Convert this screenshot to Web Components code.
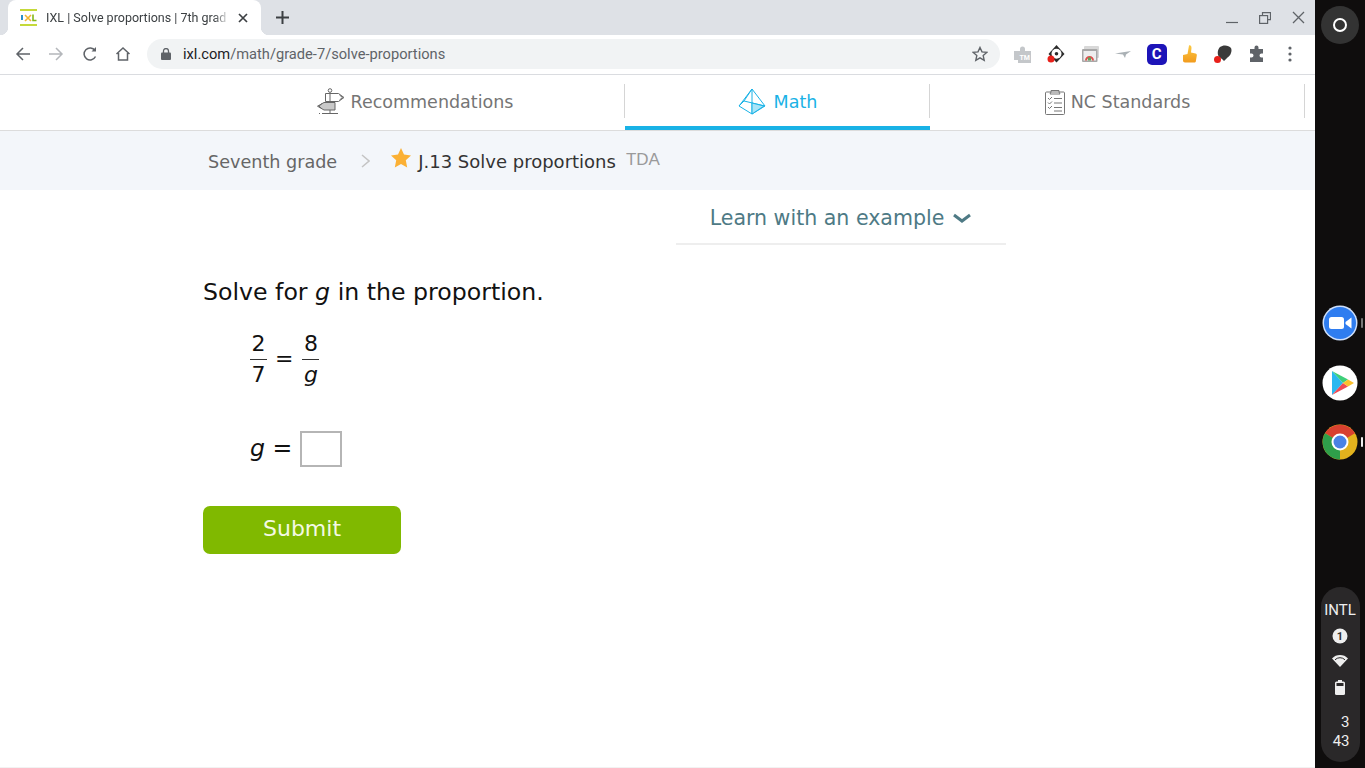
<!DOCTYPE html>
<html lang="en">
<head>
<meta charset="utf-8">
<title>IXL | Solve proportions</title>
<style>
  html, body { margin: 0; height: 100%; background: #fff; overflow: hidden; }
  body { font-family: "DejaVu Sans", sans-serif; }
</style>
</head>
<body>
<app-shell>
  <browser-tabstrip title-text="IXL | Solve proportions | 7th grad"></browser-tabstrip>
  <browser-toolbar></browser-toolbar>
  <ixl-nav>
    <nav-tab icon="sign" style="width:421px">Recommendations</nav-tab>
    <nav-tab icon="pyramid" active style="width:305px">Math</nav-tab>
    <nav-tab icon="clipboard" style="width:375px">NC Standards</nav-tab>
  </ixl-nav>
  <ixl-breadcrumb></ixl-breadcrumb>
  <learn-example>Learn with an example</learn-example>
  <ixl-question></ixl-question>
  <os-shelf slot="shelf"></os-shelf>
</app-shell>

<script>
  function define(name, html, init) {
    customElements.define(
      name,
      class extends HTMLElement {
        connectedCallback() {
          if (this.shadowRoot) return;
          this.attachShadow({ mode: "open" });
          this.shadowRoot.innerHTML = typeof html === "function" ? html(this) : html;
          if (init) init(this);
        }
      }
    );
  }

  define("app-shell", `
    <style>
      :host { display: grid; grid-template-columns: 1315px 50px; height: 768px; width: 1365px; }
      main { min-width: 0; display: flex; flex-direction: column; }
      .foot { margin-top: auto; height: 1px; background: #f2f2f2; }
    </style>
    <main><slot></slot><div class="foot"></div></main>
    <slot name="shelf"></slot>
  `);

  define("browser-tabstrip", (el) => `
    <style>
      :host { display: flex; align-items: flex-start; height: 35px; background: #dee1e6;
        font-family: Roboto, sans-serif; position: relative; }
      .tab { box-sizing: border-box; width: 253px; height: 35px; margin-left: 8px; background: #fff;
        border-radius: 8px 8px 0 0; display: flex; align-items: center; padding-left: 12px; position: relative; }
      .tab::before, .tab::after { content: ""; position: absolute; bottom: 0; width: 8px; height: 8px; }
      .tab::before { left: -8px; background: radial-gradient(circle at 0 0, #dee1e6 8px, #fff 8.5px); }
      .tab::after { right: -8px; background: radial-gradient(circle at 100% 0, #dee1e6 8px, #fff 8.5px); }
      .fav { width: 17px; height: 17px; flex: none; margin-right: 9px; }
      .title { width: 184px; font-size: 12.5px; color: #3c4043; white-space: nowrap;
        -webkit-mask-image: linear-gradient(to right, #000 168px, transparent 184px); }
      .x { width: 10px; height: 10px; margin-left: 8px; flex: none; }
      .plus { width: 13px; height: 13px; margin: 11px 0 0 15px; flex: none; }
      .win { margin-left: auto; display: flex; align-items: center; gap: 21px; height: 35px; padding-right: 10px; }
    </style>
    <div class="tab">
      <svg class="fav" viewBox="0 0 17 17">
        <rect x="0" y="0" width="17" height="2" fill="#c5d93a"/>
        <rect x="0" y="15" width="17" height="2" fill="#c5d93a"/>
        <rect x="1" y="6" width="2" height="5" fill="#2a8fc9"/>
        <path d="M5 6l6 6M11 6l-6 6" stroke="#f2b632" stroke-width="1.6"/>
        <path d="M13 5.500v6h3.500" fill="none" stroke="#82b81a" stroke-width="1.600"/>
      </svg>
      <span class="title">${el.getAttribute("title-text")}</span>
      <svg class="x" viewBox="0 0 10 10"><path d="M1 1l8 8M9 1l-8 8" stroke="#3c4043" stroke-width="1.700"/></svg>
    </div>
    <svg class="plus" viewBox="0 0 13 13"><path d="M6.500 0v13M0 6.500h13" stroke="#3c4043" stroke-width="2"/></svg>
    <div class="win">
      <svg width="12" height="12" viewBox="0 0 12 12"><path d="M0 10.500h12" stroke="#5f6368" stroke-width="1.200"/></svg>
      <svg width="12" height="12" viewBox="0 0 12 12" fill="none" stroke="#5f6368" stroke-width="1.200"><path d="M3.500 3V.6h8v7H9"/><rect x=".6" y="3.600" width="8" height="7.800"/></svg>
      <svg width="13" height="13" viewBox="0 0 13 13"><path d="M1 1l11 11M12 1L1 12" stroke="#5f6368" stroke-width="1.300"/></svg>
    </div>
  `);

  define("browser-toolbar", `
    <style>
      :host { display: flex; align-items: center; box-sizing: border-box; height: 40px; background: #fff;
        border-bottom: 1px solid #dadce0; font-family: Roboto, sans-serif; padding-bottom: 1px; }
      .nav { display: flex; align-items: center; margin-left: 15px; gap: 17.400px; width: 132px; flex: none; }
      .omni { box-sizing: border-box; width: 853px; height: 30px; border-radius: 15px; background: #f1f3f4;
        display: flex; align-items: center; padding-left: 14px; font-size: 14.670px; color: #5f6368; flex: none; }
      .omni b { font-weight: 400; color: #202124; }
      .lock { margin-right: 12px; }
      .star { margin-left: auto; margin-right: 12px; }
      .ext { display: flex; align-items: center; margin-left: 13px; gap: 13.400px; }
      .ext > * { flex: none; }
      .c { width: 20px; height: 21px; border-radius: 5px; background: #1d14b8; color: #fff; font: 700 15px/21px Roboto, sans-serif;
        text-align: center; }
    </style>
    <div class="nav">
      <svg width="16" height="16" viewBox="0 0 16 16" fill="none" stroke="#5f6368" stroke-width="1.500"><path d="M15 8H2M8 2L2 8l6 6"/></svg>
      <svg width="16" height="16" viewBox="0 0 16 16" fill="none" stroke="#b4b7bb" stroke-width="1.500"><path d="M1 8h13M8 2l6 6-6 6"/></svg>
      <svg width="16" height="16" viewBox="0 0 16 16" fill="none" stroke="#5f6368" stroke-width="1.500"><path d="M13.500 10.500A6 6 0 1 1 13 4.500"/><path d="M14 1v4.500H9.500" fill="#5f6368" stroke="none"/></svg>
      <svg width="16" height="16" viewBox="0 0 16 16" fill="none" stroke="#5f6368" stroke-width="1.500"><path d="M1.500 8L8 2l6.500 6M3.500 7v7h9V7"/></svg>
    </div>
    <div class="omni">
      <svg class="lock" width="10" height="12" viewBox="0 0 10 12"><rect y="4.500" width="10" height="7.500" rx="1" fill="#5f6368"/><path d="M2.500 5V3a2.500 2.500 0 0 1 5 0v2" fill="none" stroke="#5f6368" stroke-width="1.300"/></svg>
      <span><b>ixl.com</b>/math/grade-7/solve-proportions</span>
      <svg class="star" width="16" height="16" viewBox="0 0 16 16" fill="none" stroke="#5f6368" stroke-width="1.400"><path d="M8 1.500l2 4.400 4.800.5-3.600 3.200 1 4.700L8 11.900l-4.200 2.400 1-4.700L1.200 6.400 6 5.900z"/></svg>
    </div>
    <div class="ext">
      <svg width="20" height="20" viewBox="0 0 20 20"><path d="M1 7h6V5a2.500 2.500 0 0 1 5 0v2h6v12H5v-3H1z" fill="#c4c7ca"/><text x="6.500" y="16" font-size="7" font-weight="700" fill="#fff" font-family="Roboto">TM</text></svg>
      <svg width="20" height="20" viewBox="0 0 20 20"><path d="M10.500 1l8 9-8 8.500-8-8.500z" fill="#2b2b2b"/><circle cx="10.500" cy="9.700" r="5" fill="#fff"/><circle cx="10.500" cy="9.700" r="1.800" fill="#2b2b2b"/><circle cx="5" cy="15" r="3.500" fill="#e8201a"/></svg>
      <svg width="20" height="20" viewBox="0 0 20 20"><rect x="4" y="2" width="15" height="12" rx="1" fill="#d8d8d8"/><rect x="2" y="5" width="15.500" height="13" rx="1" fill="#a8a8a8"/><rect x="3.500" y="7" width="12.500" height="9.500" fill="#eee"/><path d="M5 16.500a4.500 4.500 0 0 1 9 0h-2a2.500 2.500 0 0 0-5 0z" fill="#d9534f"/><rect x="8" y="13.500" width="3" height="3" fill="#5aa65a"/></svg>
      <svg width="20" height="20" viewBox="0 0 20 20"><path d="M2 9.500L18 7l-5 3.500-1 3.500-2-3.500z" fill="#aab1b5"/></svg>
      <div class="c">C</div>
      <svg width="20" height="20" viewBox="0 0 20 20"><defs><linearGradient id="thumb" x1="0" y1="0" x2="0" y2="1"><stop offset="0" stop-color="#fbc943"/><stop offset="1" stop-color="#f29b1d"/></linearGradient></defs><path d="M3 11l4.500-1L9 1.500c1.500-.5 2.500.5 2.500 2.500l-.5 4.500 4.500 1c1 .3 1.500 1 1.300 2l-1 6c-.2.700-.8 1-1.500 1H5c-1.200 0-2-.8-2-2z" fill="url(#thumb)"/></svg>
      <svg width="20" height="20" viewBox="0 0 20 20"><path d="M7 3c3-2.500 9-2 11 1 1.500 3-.5 8-3.500 9.500L11 17l-2-2-3-2C4 10 4.500 5.500 7 3z" fill="#3a3a3a"/><circle cx="4.500" cy="15.500" r="3.500" fill="#e8201a"/></svg>
      <svg width="20" height="20" viewBox="0 0 20 20"><path d="M7.500 3.500a2 2 0 0 1 4 0V5H16v4.500h-1.500a2 2 0 0 0 0 4H16V18H3v-4.500h1.500a2 2 0 0 0 0-4H3V5h4.500z" fill="#5f6368"/></svg>
      <svg width="20" height="20" viewBox="0 0 20 20" fill="#5f6368"><circle cx="10" cy="4" r="1.600"/><circle cx="10" cy="10" r="1.600"/><circle cx="10" cy="16" r="1.600"/></svg>
    </div>
  `);

  define("ixl-nav", `
    <style>
      :host { display: flex; box-sizing: border-box; height: 56px; padding-left: 204px; border-bottom: 1px solid #dcdcdc; }
    </style>
    <slot></slot>
  `);

  const navIcons = {
    sign: `<svg width="29" height="28" viewBox="0 0 29 28" fill="none" stroke="#666" stroke-width="1"><circle cx="14" cy="2.500" r="1.800"/><path d="M14 4.500V25"/><path d="M9.500 5.500h13l5.500 4-5.500 4h-13zM23.500 7l3 2.500-3 2.500" /><path d="M8 14.500h11v7.500H8L1.500 18.200z" fill="#c9c9c9"/><path d="M6 15.500l-3 2.700 3 2.700"/><path d="M3 25.500h1M6 25.500h16"/></svg>`,
    pyramid: `<svg width="28" height="28" viewBox="0 0 28 28" fill="none" stroke="#19b2e6" stroke-width="1"><path d="M14 1L1 18l13 8 13-8zM14 1v25M14 1L6 13l21 5M6 13L1 18"/><path d="M14 15l12 3-12 8z" fill="#a9e4f7"/></svg>`,
    clipboard: `<svg width="20" height="26" viewBox="0 0 20 26" fill="none" stroke="#777" stroke-width="1"><rect x=".5" y="3" width="19" height="22.500" rx="1"/><path d="M6 3V1.500h8V3l1 2H5zM9 9.500h8M9 14h8M9 18.500h8M9 22h8M3 9l1.500 1.500L7 8M3 13.500L4.500 15 7 12.500M3 18l1.500 1.500L7 17"/></svg>`,
  };

  define("nav-tab", (el) => `
    <style>
      :host { display: flex; box-sizing: border-box; height: 55px; position: relative; align-items: center;
        justify-content: center; gap: 6px; padding-bottom: 2px; font-size: 17.500px; color: #757575; }
      :host([active]) { color: #19b2e6; gap: 8px; }
      :host([active])::after { content: ""; position: absolute; left: 0; right: 0; bottom: 0; height: 4px; background: #19b2e6; }
      .sep { position: absolute; right: 0; top: 9px; height: 34px; width: 1px; background: #d5d5d5; }
      svg { display: block; flex: none; }
    </style>
    ${navIcons[el.getAttribute("icon")]}
    <span><slot></slot></span>
    <div class="sep"></div>
  `);

  define("ixl-breadcrumb", `
    <style>
      :host { display: flex; align-items: center; height: 59px; background: #f3f6fa; padding-left: 208px; white-space: nowrap; }
      .grade { font-size: 17.600px; color: #666; margin-top: 2px; }
      .chev { margin: 0 21px 0 24px; }
      .star { margin-right: 7px; margin-top: -6px; }
      .skill { font-size: 18px; color: #333; margin-top: 2px; }
      .tda { font-family: "Liberation Sans", sans-serif; color: #9a9a9a; margin-left: 10px; margin-top: -2px; font-size: 17px; }
    </style>
    <span class="grade">Seventh grade</span>
    <svg class="chev" width="9" height="14" viewBox="0 0 9 14" fill="none" stroke="#c4c4c4" stroke-width="1.500"><path d="M1 1l7 6-7 6"/></svg>
    <svg class="star" width="20" height="20" viewBox="0 0 20 20"><path d="M10 0l3 6.600 7 .8-5.200 4.800L16.200 19.500 10 16l-6.200 3.500 1.400-7.300L0 7.400l7-.8z" fill="#fbb034"/></svg>
    <span class="skill">J.13 Solve proportions</span>
    <span class="tda">TDA</span>
  `);

  define("learn-example", `
    <style>
      :host { display: flex; box-sizing: border-box; width: 330px; height: 55px; margin-left: 676px; padding-top: 3px;
        justify-content: center; align-items: center; gap: 8px; border-bottom: 2px solid #eee; font-size: 20.560px; color: #4e7a85; }
    </style>
    <span><slot></slot></span>
    <svg width="20" height="11" viewBox="0 0 20 11" fill="none" stroke="#4e7a85" stroke-width="3"><path d="M2 2l8 6 8-6"/></svg>
  `);

  define("ixl-question", `
    <style>
      :host { display: block; padding: 30px 0 0 203px; color: #111; }
      .prompt { font-size: 23.650px; line-height: 34px; white-space: pre; }
      .eq { display: flex; align-items: center; margin: 19px 0 0 47px; font-size: 22px; }
      .frac { display: flex; flex-direction: column; align-items: center; width: 17px; }
      .frac span { line-height: 29px; }
      .frac span:first-child { line-height: 31px; border-bottom: 1px solid #333; width: 100%; text-align: center; }
      .op { margin: 0 9px 0 8px; }
      .ans { display: flex; align-items: center; margin: 42px 0 0 47px; font-size: 23.650px; line-height: 34px; }
      .ans span { margin-top: -2px; }
      .box { box-sizing: border-box; width: 42px; height: 36px; border: 2px solid #b5b5b5; margin-left: 8px; background: #fff; }
      button { display: block; box-sizing: border-box; margin-top: 39px; width: 198px; height: 48px; border: 0; border-radius: 7px;
        background: #80b900; color: #f4f9e4; font: 22px "DejaVu Sans", sans-serif; padding: 0 0 3px; }
    </style>
    <div class="prompt">Solve for <i>g</i> in the proportion.</div>
    <div class="eq">
      <div class="frac"><span>2</span><span>7</span></div>
      <span class="op">=</span>
      <div class="frac"><span>8</span><span><i>g</i></span></div>
    </div>
    <div class="ans"><span><i>g</i>&nbsp;=</span><div class="box"></div></div>
    <button>Submit</button>
  `);

  define("os-shelf", `
    <style>
      :host { display: flex; flex-direction: column; align-items: center; position: relative; height: 768px; background: #0f0d0d; font-family: Roboto, sans-serif; color: #eee; }
      .launcher { width: 38px; height: 38px; border-radius: 50%; background: #333; display: flex; align-items: center; justify-content: center; margin-top: 6px; }
      .launcher i { display: block; width: 10px; height: 10px; border: 2px solid #fff; border-radius: 50%; }
      .apps { display: flex; flex-direction: column; gap: 23.500px; margin-top: 261px; }
      .app { width: 36px; height: 36px; display: block; }
      .slot { position: relative; height: 36px; }
      .pip { position: absolute; left: 39px; top: 13px; width: 2px; height: 10px; border-radius: 1px; background: #777; }
      .pip.on { background: #eee; }
      .status { margin-top: auto; margin-bottom: 6px; width: 39px; height: 175px; border-radius: 19.500px; background: #2a2829; display: flex; flex-direction: column;
        align-items: center; box-sizing: border-box; padding-top: 15px; font-size: 15px; line-height: 16px; }
      .status svg { display: block; }
      .clock { margin-top: 18px; text-align: right; font-size: 15px; line-height: 19px; width: 19px; }
    </style>
    <div class="launcher"><i></i></div>
    <div class="apps">
      <div class="slot"><svg class="app" viewBox="0 0 36 36"><circle cx="18" cy="18" r="17.500" fill="#cfe0fb"/><circle cx="18" cy="18" r="16" fill="#2f7df0"/><rect x="7" y="12" width="15" height="12" rx="2.500" fill="#fff"/><path d="M23.500 17l6-4.500v11l-6-4.500z" fill="#fff"/></svg><div class="pip"></div></div>
      <div class="slot"><svg class="app" viewBox="0 0 36 36"><circle cx="18" cy="18" r="17.500" fill="#fff"/><path d="M10 6l11 12L10 30z" fill="#2ab8f0"/><path d="M10 6l16 8.500-5 3.500z" fill="#3ecf7a"/><path d="M10 30l16-8.500-5-3.500z" fill="#ef4a55"/><path d="M26 14.500l6 3.500-6 3.500-5-3.500z" fill="#fbc02d"/></svg></div>
      <div class="slot"><svg class="app" viewBox="0 0 36 36"><circle cx="18" cy="18" r="17.500" fill="#e3b21d"/><path d="M18 18L3 9.300A17.500 17.500 0 0 1 33 9.300z" fill="#d8402f"/><path d="M18 18L3 9.300A17.500 17.500 0 0 0 18 35.500z" fill="#2f9e4a"/><circle cx="18" cy="18" r="8.500" fill="#fff"/><circle cx="18" cy="18" r="6.500" fill="#4a82e4"/></svg><div class="pip on"></div></div>
    </div>
    <div class="status">
      <span>INTL</span>
      <svg style="margin-top:10px" width="16" height="16" viewBox="0 0 16 16"><circle cx="8" cy="8" r="7.500" fill="#eee"/><text x="8" y="12" text-anchor="middle" font-size="11" font-weight="700" fill="#333" font-family="Roboto">1</text></svg>
      <svg style="margin-top:11px" width="16" height="12" viewBox="0 0 16 12"><path d="M0 3.500a11 11 0 0 1 16 0L8 12z" fill="#eee"/><path d="M3 4.800a7 7 0 0 1 10 0" stroke="#2a2829" fill="none"/></svg>
      <svg style="margin-top:13px" width="10" height="15" viewBox="0 0 10 15"><rect x="3" y="0" width="4" height="2" fill="#eee"/><rect y="1.500" width="10" height="13.500" rx="1.500" fill="#eee"/><rect x="1.500" y="3" width="7" height="3" fill="#2a2829"/></svg>
      <div class="clock">3<br>43</div>
    </div>
  `);
</script>
</body>
</html>
